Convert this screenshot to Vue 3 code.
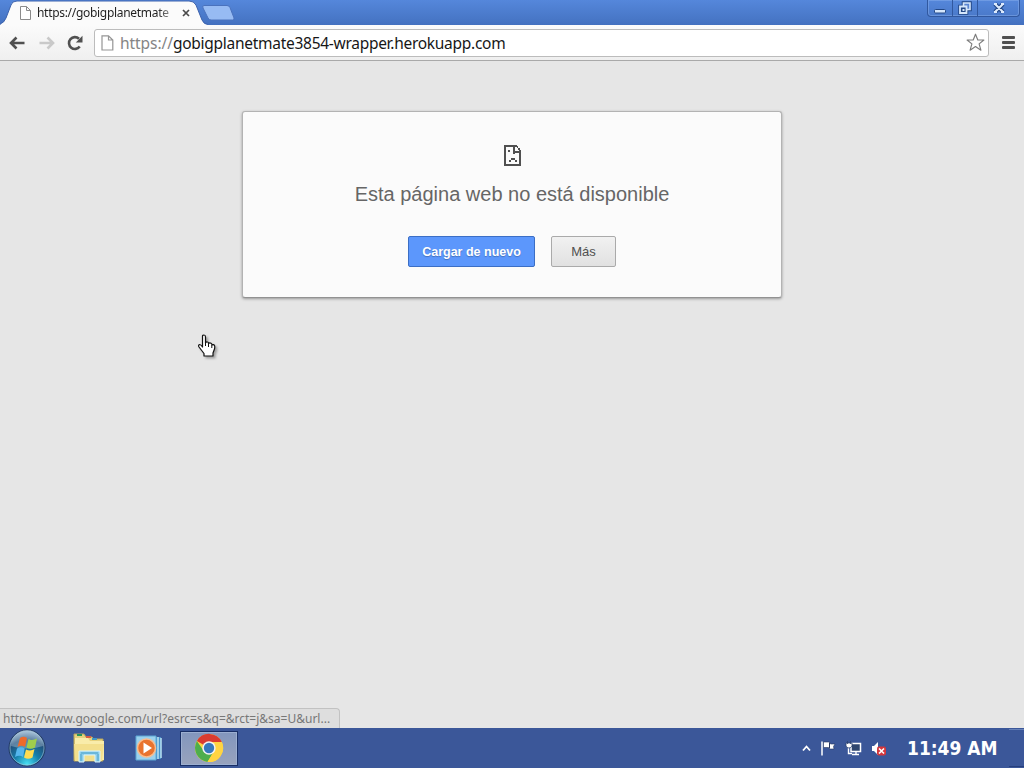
<template>
    <div class="screen">
        <header class="tab-strip">
            <div class="tab">
                <svg class="tab-shape" width="208" height="26" viewBox="0 0 208 26">
                    <path d="M0 26V24Q4 23 6 18L11 5Q12 1 17 1H189Q194 1 196 5L202 20Q204 24.5 208 24.5V26Z" fill="#fbfbfb" stroke="#3c62ad" stroke-width="1" />
                    <path d="M0 25H208V26H0Z" fill="#fbfbfb" />
                </svg>
                <svg class="tab-page" width="11" height="14" viewBox="0 0 11 14">
                    <path d="M.5.5H6.5L10.5 4.5V13.5H.5ZM6.5.5V4.5H10.5" fill="#fff" stroke="#8b8b8b" />
                </svg>
                <span class="tab-title">https://gobigplanetmate</span>
                <svg class="tab-close" width="8" height="8" viewBox="0 0 8 8">
                    <path d="M1 1L7 7M7 1L1 7" stroke="#4a4a4a" stroke-width="1.7" />
                </svg>
            </div>
            <svg class="new-tab" width="33" height="16" viewBox="0 0 33 16">
                <path d="M2 .5H25Q27 .5 28 2.5L32 13Q32.500 15 30.500 15H9Q7 15 6 13L1 3Q0 .5 2 .5Z" fill="#97bbf3" stroke="#4a72bd" />
            </svg>
            <div class="window-buttons">
                <button type="button" class="win-btn minimize" aria-label="Minimizar">
                    <svg width="14" height="14" viewBox="0 0 14 14">
                        <rect x="1.500" y="8.500" width="11" height="3.500" rx="1" fill="#d5e6fb" stroke="#234887" />
                    </svg>
                </button>
                <button type="button" class="win-btn restore" aria-label="Restaurar">
                    <svg width="14" height="14" viewBox="0 0 14 14">
                        <path d="M5.500 2H12V8.500H5.500ZM2 5.500H8.500V12H2Z" fill="none" stroke="#234887" stroke-width="3.600" />
                        <path d="M5.500 2H12V8.500H5.500Z" fill="#5a85d1" stroke="#d5e6fb" stroke-width="1.600" />
                        <path d="M2 5.500H8.500V12H2Z" fill="#234887" stroke="#d5e6fb" stroke-width="1.800" />
                        <path d="M4.500 8H6.500V10H4.500Z" fill="#d5e6fb" />
                    </svg>
                </button>
                <button type="button" class="win-btn close" aria-label="Cerrar">
                    <svg width="14" height="14" viewBox="0 0 14 14">
                        <path d="M3 3L11 11M11 3L3 11" stroke="#234887" stroke-width="4.400" />
                        <path d="M3 3L11 11M11 3L3 11M2 3H5M9 3H12M2 11H5M9 11H12" stroke="#dceafc" stroke-width="2" />
                    </svg>
                </button>
            </div>
        </header>

        <nav class="toolbar">
            <svg class="back" width="16" height="14" viewBox="0 0 16 14">
                <path d="M7.500 1.500L2 7L7.500 12.500M2 7H15.500" fill="none" stroke="#505050" stroke-width="2.600" />
            </svg>
            <svg class="forward" width="16" height="14" viewBox="0 0 16 14">
                <path d="M8.500 1.500L14 7L8.500 12.500M14 7H.5" fill="none" stroke="#c9c9c9" stroke-width="2.600" />
            </svg>
            <svg class="reload" width="16" height="16" viewBox="0 0 16 16">
                <path d="M12.700 11.500A5.900 5.900 0 1 1 12 3.800" fill="none" stroke="#505050" stroke-width="2.600" />
                <path d="M15.500 .8V7.500H8.800Z" fill="#505050" />
            </svg>
            <div class="omnibox">
                <svg class="url-page" width="13" height="16" viewBox="0 0 13 16">
                    <path d="M1 .8H7.500L11.800 5V15H1ZM7.500 .8V5H11.800" fill="#fff" stroke="#959595" stroke-width="1.200" />
                </svg>
                <div class="url"><span class="scheme">https://</span><span class="host">gobigplanetmate3854-wrapper.herokuapp.com</span></div>
                <svg class="star" width="19" height="19" viewBox="0 0 19 19">
                    <path d="M9.500 1.200L11.800 7H17.900L13.100 10.900L14.900 17.200L9.500 13.600L4.100 17.200L5.900 10.900L1.100 7H7.200Z" fill="#fff" stroke="#7d7d7d" stroke-width="1.150" stroke-linejoin="round" />
                </svg>
            </div>
            <svg class="menu" width="13" height="13" viewBox="0 0 13 13">
                <path d="M1 1.500H12M1 6.500H12M1 11.500H12" stroke="#505050" stroke-width="2.800" stroke-linecap="round" />
            </svg>
        </nav>

        <main class="page">
            <section class="error-box">
                <svg class="sad-page" width="17" height="21" viewBox="0 0 17 21" shape-rendering="crispEdges">
                    <path d="M0 0H13V2H2V19H15V8H9V2H11V6H15V5H17V21H0ZM13 1H14V3H13ZM14 3H16V5H14Z" fill="#505050" />
                    <path d="M4 5H6V7H4ZM9 8H11V9H9ZM7 13H11V15H7ZM5 15H7V17H5ZM11 15H13V17H11Z" fill="#505050" />
                </svg>
                <h1>Esta página web no está disponible</h1>
                <div class="actions">
                    <button type="button" class="btn reload-btn">Cargar de nuevo</button>
                    <button type="button" class="btn more-btn">Más</button>
                </div>
            </section>
            <div class="status">https://www.google.com/url?esrc=s&amp;q=&amp;rct=j&amp;sa=U&amp;url...</div>
        </main>

        <footer class="taskbar">
            <svg class="start" width="38" height="38" viewBox="0 0 38 38">
                <defs>
                    <radialGradient id="orb" cx=".5" cy=".95" r=".9">
                        <stop offset="0" stop-color="#48e1f4" />
                        <stop offset=".4" stop-color="#167eaa" />
                        <stop offset=".75" stop-color="#234e79" />
                        <stop offset="1" stop-color="#8ba9c6" />
                    </radialGradient>
                </defs>
                <circle cx="19" cy="19" r="18" fill="url(#orb)" stroke="#20385f" />
                <path d="M3 17A16 16 0 0 1 35 17Q19 22 3 17Z" fill="#d9edf5" opacity=".32" />
                <circle cx="19" cy="19" r="17" fill="none" stroke="#a7c8dc" stroke-opacity=".6" />
                <path d="M12 9Q15.500 6.500 19 9L17 18Q13 15.500 9.500 18Z" fill="#ed6a2b" />
                <path d="M20.500 10Q24 12 29 9.500L27 18.500Q22.500 21 18.500 18.500Z" fill="#9fcd4c" />
                <path d="M9 19.500Q13 17 16.700 19.500L15 28Q11.500 25.500 7 28Z" fill="#55b6ed" />
                <path d="M18 20.500Q22.500 22.500 26.500 20L24.500 28.500Q20 31 16 28.500Z" fill="#ffdc51" />
            </svg>
            <svg class="explorer" width="34" height="32" viewBox="0 0 34 32">
                <path d="M2 5V2H12L14 5H20L22 7H31V29H2Z" fill="#e7d27d" stroke="#b7a45b" />
                <path d="M5 3H10" stroke="#26945a" stroke-width="2" />
                <path d="M14 5H19" stroke="#d85c45" stroke-width="2" />
                <path d="M3 6H16L18 9H32V28H3Z" fill="#f9ecaa" />
                <path d="M20 7H25" stroke="#419ac6" stroke-width="2" />
                <path d="M2 12H32L30 29H3Z" fill="#f3df8d" />
                <path d="M7 30V19H28V30H23V23H12V30Z" fill="#8dcdea" stroke="#d9f4fb" />
                <path d="M9 21H26M9 22V29M26 22V29" stroke="#4ba1ca" />
            </svg>
            <svg class="media" width="28" height="26" viewBox="0 0 28 26">
                <path d="M8 2H26V24H8Z" fill="#4993c9" />
                <path d="M23 2V24M26 3V23" stroke="#b9e4f4" stroke-width="1.500" />
                <path d="M1 1H21V25H1Z" fill="#9bd1ed" stroke="#5da8d4" />
                <circle cx="11.500" cy="13" r="9" fill="#e9732e" stroke="#f9bc8d" stroke-width="1.500" />
                <path d="M8.500 7.500L17 13L8.500 18.500Z" fill="#fff" />
            </svg>
            <div class="running">
                <svg width="30" height="30" viewBox="0 0 30 30">
                    <circle cx="15" cy="15" r="14" fill="#ffd442" />
                    <path d="M15 15L2.900 8A14 14 0 0 1 27.800 9H15Z" fill="#d93b30" />
                    <path d="M2.900 8A14 14 0 0 0 13.500 28.900L20.200 18L9.800 18Z" fill="#4eae4c" />
                    <path d="M20.200 18L13.500 28.900A14 14 0 0 0 27.800 9H15Z" fill="#ffd442" />
                    <circle cx="15" cy="15" r="6.700" fill="#f2f2f2" />
                    <circle cx="15" cy="15" r="5.200" fill="#3578bd" />
                </svg>
            </div>
            <div class="tray">
                <svg width="9" height="7" viewBox="0 0 9 7">
                    <path d="M1 5.500L4.500 1.500L8 5.500" fill="none" stroke="#fff" stroke-width="1.800" />
                </svg>
                <svg width="16" height="15" viewBox="0 0 16 15">
                    <path d="M2 .5V14.500" stroke="#fff" stroke-width="1.500" />
                    <path d="M3.500 1H9.500L10.500 3H15L13.500 5.500L14 8H9.500L8.500 6.500H3.500Z" fill="#fff" stroke="#26375e" stroke-width=".6" />
                    <path d="M9.500 1.500V7.500" stroke="#26375e" />
                </svg>
                <svg width="17" height="15" viewBox="0 0 17 15">
                    <path d="M6 2.500H15.500V10.500H6Z" fill="#30476f" stroke="#fff" stroke-width="1.500" />
                    <path d="M11 11V13.500M7 13.500H14M3.500 6V12.500H7" fill="none" stroke="#fff" stroke-width="1.400" />
                    <path d="M1 2H7V5Q6 7 4 7Q1.500 7 1 5ZM2.500 0V3M5.500 0V3" fill="#fff" stroke="#2b4170" stroke-width=".8" />
                </svg>
                <svg width="16" height="15" viewBox="0 0 16 15">
                    <path d="M1 5H3L7 1V14L3 10H1Z" fill="#fff" />
                    <rect x="6" y="5.500" width="9" height="9" rx="2" fill="#d4363b" />
                    <path d="M8 7.500L13 12.500M13 7.500L8 12.500" stroke="#fff" stroke-width="1.600" />
                </svg>
            </div>
            <time class="clock">{{ clock }}</time>
            <div class="show-desktop"></div>
        </footer>

        <svg class="pointer" width="22" height="27" viewBox="0 0 22 27">
            <path d="M4.500 2Q4.500 1 6 1Q7.500 1 7.500 3V9Q8 7.500 9.500 8Q10.500 8 10.500 9.500Q11.500 8.500 13 9.200Q14 9.800 14 11Q15.500 10 16.500 11.500Q17 12.500 16.500 15L15 19V22H6V19.500L1 13Q0 11 1.500 10.500Q3 10.500 4.500 13Z" fill="#fff" stroke="#111" stroke-width="1.200" stroke-linejoin="round" />
            <path d="M7.500 9V12M10.500 9.500V13M13.800 11V14" stroke="#111" />
        </svg>
    </div>
</template>

<script setup>
import { ref } from "vue";

const clock = ref("11:49 AM");
</script>

<style>
html,
body {
    margin: 0;
    overflow: hidden;
}
</style>

<style scoped>
.screen {
    display: flex;
    flex-direction: column;
    width: 1024px;
    height: 768px;
    position: relative;
    background: #e6e6e6;
    font-family: "Noto Sans", sans-serif;
}

svg {
    display: block;
    flex: none;
}

button {
    margin: 0;
    padding: 0;
    box-sizing: border-box;
}

.tab-strip {
    height: 25px;
    flex: none;
    display: flex;
    background: linear-gradient(#5587db, #4877c7 75%, #4370bf);
}

.tab {
    position: relative;
    width: 202px;
    height: 25px;
    box-sizing: border-box;
    display: flex;
    align-items: center;
    padding-left: 20px;
}

.tab-shape {
    position: absolute;
    left: 0;
    top: 0;
}

.tab-page,
.tab-title,
.tab-close {
    position: relative;
}

.tab-title {
    flex: none;
    width: 137px;
    margin: 0 8px 0 6px;
    font-size: 12px;
    letter-spacing: -.3px;
    line-height: 20px;
    white-space: nowrap;
    color: transparent;
    background: linear-gradient(90deg, #202020 88%, #b0b0b0);
    -webkit-background-clip: text;
    background-clip: text;
}

.new-tab {
    margin-top: 5px;
}

.window-buttons {
    display: flex;
    width: 93px;
    height: 17px;
    margin: 0 4px 0 auto;
    box-sizing: border-box;
    border: 1px solid #31589f;
    border-top: 0;
    border-radius: 0 0 4px 4px;
    box-shadow: inset 0 0 0 1px rgba(151, 186, 239, .4);
}

.win-btn {
    display: flex;
    align-items: center;
    justify-content: center;
    border: 0;
    background: transparent;
}

.minimize {
    width: 25px;
    border-right: 1px solid #31589f;
}

.restore {
    width: 25px;
    border-right: 1px solid #31589f;
}

.close {
    flex: 1;
}

.toolbar {
    height: 36px;
    flex: none;
    display: flex;
    align-items: center;
    box-sizing: border-box;
    padding: 0 8px 0 9px;
    background: linear-gradient(#fbfbfb, #efefef);
    border-bottom: 1px solid #a9a9a9;
}

.forward {
    margin-left: 14px;
}

.reload {
    margin-left: 12px;
}

.omnibox {
    display: flex;
    align-items: center;
    width: 895px;
    height: 28px;
    box-sizing: border-box;
    margin-left: 11px;
    padding: 0 3px 0 6px;
    border: 1px solid #bcbcbc;
    border-radius: 3px;
    background: #fff;
}

.url {
    flex: 1;
    margin-left: 6px;
    font-size: 15.5px;
    line-height: 22px;
    white-space: nowrap;
    color: #171717;
}

.scheme {
    color: #858585;
    letter-spacing: -.05px;
}

.host {
    letter-spacing: -.28px;
}

.menu {
    margin-left: 13px;
}

.page {
    flex: 1;
    display: flex;
    flex-direction: column;
    justify-content: space-between;
    min-height: 0;
}

.error-box {
    width: 540px;
    height: 187px;
    box-sizing: border-box;
    margin: 50px auto 0;
    padding-top: 33px;
    display: flex;
    flex-direction: column;
    align-items: center;
    border: 1px solid #b3b3b3;
    border-bottom-color: #929292;
    border-radius: 3px;
    background: #fbfbfb;
    box-shadow: 0 1px 3px rgba(0, 0, 0, .35);
    font-family: "Liberation Sans", Arial, sans-serif;
}

.sad-page {
    margin-left: 1px;
}

h1 {
    margin: 16px 0 0;
    font-size: 20px;
    line-height: 24px;
    font-weight: 400;
    color: #666;
    white-space: nowrap;
}

.actions {
    display: flex;
    gap: 16px;
    margin-top: 30px;
}

.btn {
    height: 31px;
    border-radius: 2px;
    font: 13px "Liberation Sans", Arial, sans-serif;
}

.reload-btn {
    width: 127px;
    border: 1px solid #3b6ec5;
    background: #5c97fc;
    color: #fff;
    font-weight: 700;
    font-size: 12.5px;
    text-shadow: 0 1px 1px rgba(0, 0, 0, .25);
}

.more-btn {
    width: 65px;
    border: 1px solid #aaa;
    background: linear-gradient(#f1f1f1, #e1e1e1);
    color: #505050;
}

.status {
    width: 340px;
    height: 20px;
    box-sizing: border-box;
    padding-left: 3px;
    border: 1px solid #c2c2c2;
    border-left: 0;
    border-bottom: 0;
    border-radius: 0 4px 0 0;
    background: #dedede;
    color: #777;
    font-size: 12px;
    line-height: 19px;
    white-space: nowrap;
}

.taskbar {
    height: 40px;
    flex: none;
    display: flex;
    align-items: center;
    background: #3b5799;
}

.start {
    margin-left: 8px;
}

.explorer {
    margin-left: 26px;
}

.media {
    margin-left: 29px;
}

.running {
    display: flex;
    align-items: center;
    justify-content: center;
    width: 58px;
    height: 35px;
    box-sizing: border-box;
    margin-left: 17px;
    border: 1px solid #192f66;
    box-shadow: inset 0 0 0 1px #9baed0;
    background: linear-gradient(#8296bd, #98a3bd);
}

.tray {
    display: flex;
    align-items: center;
    gap: 9px;
    margin-left: auto;
}

.clock {
    width: 93px;
    margin-left: 20px;
    color: #fff;
    font-family: "DejaVu Sans Condensed", "DejaVu Sans", sans-serif;
    font-stretch: condensed;
    font-size: 19px;
    line-height: 24px;
    font-weight: 700;
    white-space: nowrap;
}

.show-desktop {
    width: 15px;
    height: 38px;
    margin-left: 9px;
    box-sizing: border-box;
    border-top: 1px solid #6681b9;
    border-bottom: 1px solid #263f7d;
}

.pointer {
    position: absolute;
    left: 198px;
    top: 334px;
    filter: drop-shadow(2px 2px 1px rgba(0, 0, 0, .3));
}
</style>
